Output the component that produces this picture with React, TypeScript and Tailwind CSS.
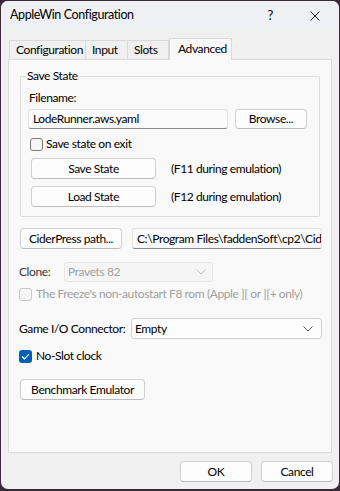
import React from "react";

const font = { fontFamily: 'Lato, "Noto Sans", sans-serif', letterSpacing: "-0.4px" };

function Btn({ children, className = "" }: { children: React.ReactNode; className?: string }) {
  return (
    <div
      className={`flex items-center justify-center whitespace-nowrap rounded-[4px] border border-[#d0d0d0] border-b-[#bcbcbc] bg-[#fdfdfd] text-[12px] leading-none text-black ${className}`}
    >
      {children}
    </div>
  );
}

function Chevron({ color }: { color: string }) {
  return (
    <svg width="10" height="6" viewBox="0 0 10 6" fill="none">
      <path d="M0.5 0.5 L5 5 L9.5 0.5" stroke={color} strokeWidth="1" />
    </svg>
  );
}

function CheckBox({ checked = false, disabled = false }: { checked?: boolean; disabled?: boolean }) {
  if (checked) {
    return (
      <div className="flex h-[13px] w-[13px] shrink-0 items-center justify-center rounded-[3px] bg-[#005fb8]">
        <svg width="9" height="7" viewBox="0 0 9 7" fill="none">
          <path d="M1 3.5 L3.4 5.8 L8 1.2" stroke="white" strokeWidth="1.2" />
        </svg>
      </div>
    );
  }
  return (
    <div
      className={`h-[13px] w-[13px] shrink-0 rounded-[3px] border ${
        disabled ? "border-[#c8c8c8] bg-[#f5f5f5]" : "border-[#7a7a7a] bg-[#f6f6f6]"
      }`}
    />
  );
}

export default function App() {
  return (
    <div className="h-[491px] w-[340px] bg-[#3b2838] pl-[1px] pt-[1px]" style={font}>
      <div className="flex h-[488px] w-[338px] flex-col overflow-hidden whitespace-nowrap rounded-[7px] bg-[#f0f0f0]">
        {/* Title bar */}
        <div className="flex h-[29px] shrink-0 items-center bg-[#eff0f3]">
          <div className="ml-[9px] text-[12.5px] text-black">AppleWin Configuration</div>
          <div className="ml-auto mr-[37px] text-[13px] text-black">?</div>
          <svg className="mr-[19px]" width="10" height="10" viewBox="0 0 10 10" fill="none">
            <path d="M0.5 0.5 L9.5 9.5 M9.5 0.5 L0.5 9.5" stroke="#1a1a1a" strokeWidth="1" />
          </svg>
        </div>

        {/* Tabs */}
        <div className="mt-[8px] flex h-[21px] items-end pl-[8px]">
          <div className="flex h-[19px] w-[77px] items-center border border-b-0 border-[#d9d9d9] bg-[#f0f0f0] pl-[6px] text-[12px] text-black">
            Configuration
          </div>
          <div className="flex h-[19px] w-[42px] items-center border-b-0 border-r border-t border-[#d9d9d9] bg-[#f0f0f0] pl-[6px] text-[12px] text-black">
            Input
          </div>
          <div className="flex h-[19px] w-[41px] items-center border-b-0 border-r border-t border-[#d9d9d9] bg-[#f0f0f0] pl-[6px] text-[12px] text-black">
            Slots
          </div>
          <div className="relative z-10 -mb-[1px] flex h-[22px] w-[63px] items-center border border-b-0 border-[#d9d9d9] bg-[#f9f9f9] pb-[2px] pl-[8px] text-[12px] text-black">
            Advanced
          </div>
        </div>

        {/* Panel */}
        <div className="ml-[7px] flex h-[394px] w-[324px] flex-col border border-[#dcdcdc] bg-[#f9f9f9] text-[12px] text-black">
          {/* Group */}
          <div className="relative ml-[11px] mt-[16px] h-[141px] w-[300px] shrink-0 rounded-[2px] border border-[#dcdcdc]">
            <div className="absolute left-[5px] top-[-9px] bg-[#f9f9f9] px-[1px] leading-[16px]">Save State</div>
            <div className="ml-[8px] mt-[13px] leading-[16px]">Filename:</div>
            <div className="ml-[7px] mt-[3px] flex items-center gap-[7px]">
              <div className="flex h-[20px] w-[200px] items-center rounded-[3px] border border-[#e2e2e2] border-b-[#8a8a8a] bg-[#fbfbfb] pl-[4px]">
                LodeRunner.aws.yaml
              </div>
              <Btn className="h-[20px] w-[72px]">Browse...</Btn>
            </div>
            <div className="ml-[9px] mt-[7px] flex items-center gap-[3px] leading-[16px]">
              <CheckBox />
              <span>Save state on exit</span>
            </div>
            <div className="ml-[10px] mt-[6px] flex items-center">
              <Btn className="h-[21px] w-[125px]">Save State</Btn>
              <span className="ml-[15px]">(F11 during emulation)</span>
            </div>
            <div className="ml-[10px] mt-[7px] flex items-center">
              <Btn className="h-[21px] w-[125px]">Load State</Btn>
              <span className="ml-[15px]">(F12 during emulation)</span>
            </div>
          </div>

          {/* CiderPress */}
          <div className="ml-[11px] mt-[11px] flex items-center">
            <Btn className="h-[21px] w-[102px]">CiderPress path...</Btn>
            <div className="ml-[10px] flex h-[21px] w-[190px] items-center overflow-hidden rounded-[3px] border border-[#e2e2e2] border-b-[#8a8a8a] bg-[#fbfbfb] pl-[4px]">
              C:\Program Files\faddenSoft\cp2\Cide
            </div>
          </div>

          {/* Clone */}
          <div className="ml-[10px] mt-[13px] flex items-center">
            <span className="w-[45px] text-[#3a3a3a]">Clone:</span>
            <div className="flex h-[20px] w-[149px] items-center justify-between rounded-[3px] border border-[#e6e6e6] bg-[#f5f5f5] pl-[3px] pr-[6px] text-[#a0a0a0]">
              <span>Pravets 82</span>
              <Chevron color="#bdbdbd" />
            </div>
          </div>

          <div className="ml-[10px] mt-[4px] flex items-center gap-[4px] leading-[16px] text-[#a0a0a0]">
            <CheckBox disabled />
            <span>The Freeze's non-autostart F8 rom (Apple ][ or ][+ only)</span>
          </div>

          {/* Game IO */}
          <div className="ml-[10px] mt-[16px] flex items-center">
            <span className="w-[112px]">Game I/O Connector:</span>
            <div className="flex h-[21px] w-[191px] items-center justify-between rounded-[3px] border border-[#d0d0d0] bg-[#fdfdfd] pl-[3px] pr-[8px]">
              <span>Empty</span>
              <Chevron color="#5a5a5a" />
            </div>
          </div>

          <div className="ml-[10px] mt-[9px] flex items-center gap-[4px] leading-[16px]">
            <CheckBox checked />
            <span>No-Slot clock</span>
          </div>

          <Btn className="ml-[11px] mt-[15px] h-[21px] w-[125px]">Benchmark Emulator</Btn>
        </div>

        {/* Bottom buttons */}
        <div className="mt-[8px] flex justify-end gap-[9px] pr-[6px]">
          <Btn className="h-[21px] w-[72px] border-[#0067c0] border-b-[#0067c0]">OK</Btn>
          <Btn className="h-[21px] w-[72px]">Cancel</Btn>
        </div>
      </div>
    </div>
  );
}
